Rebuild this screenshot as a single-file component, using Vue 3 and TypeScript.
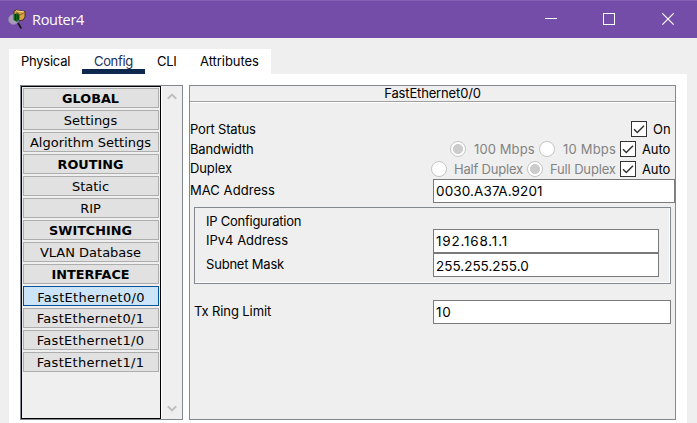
<script setup lang="ts">
import { ref } from 'vue'

interface NavItem { text: string; heading?: boolean }

const tabs = ['Physical', 'Config', 'CLI', 'Attributes']
const activeTab = ref('Config')
const nav: NavItem[] = [
  { text: 'GLOBAL', heading: true },
  { text: 'Settings' },
  { text: 'Algorithm Settings' },
  { text: 'ROUTING', heading: true },
  { text: 'Static' },
  { text: 'RIP' },
  { text: 'SWITCHING', heading: true },
  { text: 'VLAN Database' },
  { text: 'INTERFACE', heading: true },
  { text: 'FastEthernet0/0' },
  { text: 'FastEthernet0/1' },
  { text: 'FastEthernet1/0' },
  { text: 'FastEthernet1/1' },
]
const selected = ref('FastEthernet0/0')
</script>

<template>
  <div class="window">
    <header class="titlebar">
      <svg class="logo" width="19" height="20" viewBox="0 0 19 20">
        <path d="M6 2 8 1 17 2.500 17 8 15 11 10 12 6 6Z" fill="#d9a348" stroke="#3c2a18" stroke-width=".9" />
        <path d="M8 2.500 12 6 16.500 3.500" fill="none" stroke="#8a5d22" />
        <path d="M8 1.800 16 2.800" stroke="#ffe08a" />
        <circle cx="5.500" cy="10.500" r="5" fill="#a99bbb" stroke="#8d78ad" />
        <path d="M5.500 5.500 9 4 11.500 6 11.500 10.500 9 13 5.500 11Z" fill="#12651c" />
        <path d="M7.500 5v6M10 5.500v5" stroke="#0a2d10" />
        <path d="M10 14 13.300 19.500" stroke="#171717" stroke-width="1.800" />
      </svg>
      <h1 class="title">Router4</h1>
      <svg class="controls" width="131" height="12" viewBox="0 0 131 12" fill="none" stroke="#fff">
        <path d="M0 5.500h12" />
        <rect x="58.500" y=".5" width="11" height="11" />
        <path d="M117.300.3l11.400 11.400M128.700.3l-11.400 11.400" stroke-width="1.100" />
      </svg>
    </header>

    <nav class="tabs">
      <button v-for="t in tabs" :key="t" class="tab" :class="[t.toLowerCase(), { active: t === activeTab }]" @click="activeTab = t">
        <span>{{ t }}</span>
      </button>
    </nav>

    <main class="page">
      <aside class="sidebar">
        <div class="list">
          <button v-for="n in nav" :key="n.text" class="item" :class="{ heading: n.heading, port: n.text.startsWith('Fast'), selected: n.text === selected }">{{ n.text }}</button>
        </div>
        <div class="scroll">
          <svg width="10" height="7" viewBox="0 0 10 7"><path d="M.8 5.800 5 1.600l4.200 4.200" /></svg>
          <svg width="10" height="7" viewBox="0 0 10 7"><path d="M.8 1.200 5 5.400l4.200-4.200" /></svg>
        </div>
      </aside>

      <section class="panel">
        <h2 class="panel-title">FastEthernet0/0</h2>
        <div class="row status">
          <span class="label">Port Status</span>
          <span class="check"><svg width="16" height="16"><path d="M3 8.200 6.300 11.500 13 4.800" /></svg></span><span class="on">On</span>
        </div>
        <div class="row bandwidth">
          <span class="label">Bandwidth</span>
          <i class="radio filled"></i><span class="dim w100">100 Mbps</span>
          <i class="radio"></i><span class="dim w10">10 Mbps</span>
          <span class="check"><svg width="16" height="16"><path d="M3 8.200 6.300 11.500 13 4.800" /></svg></span><span class="auto">Auto</span>
        </div>
        <div class="row duplex">
          <span class="label">Duplex</span>
          <i class="radio"></i><span class="dim half">Half Duplex</span>
          <i class="radio filled"></i><span class="dim full">Full Duplex</span>
          <span class="check"><svg width="16" height="16"><path d="M3 8.200 6.300 11.500 13 4.800" /></svg></span><span class="auto">Auto</span>
        </div>
        <div class="row mac">
          <span class="label">MAC Address</span>
          <input class="field" value="0030.A37A.9201" />
        </div>
        <div class="group">
          <div class="legend">IP Configuration</div>
          <div class="row ip"><span class="label">IPv4 Address</span><input class="field" value="192.168.1.1" /></div>
          <div class="row mask"><span class="label">Subnet Mask</span><input class="field" value="255.255.255.0" /></div>
        </div>
        <div class="row tx"><span class="label">Tx Ring Limit</span><input class="field" value="10" /></div>
      </section>
    </main>
  </div>
</template>

<style>
body { margin: 0; overflow: hidden; }
</style>

<style scoped>
* { box-sizing: border-box; }
button, input { font: inherit; color: inherit; margin: 0; border-radius: 0; outline: 0; }
.window { display: flex; flex-direction: column; width: 697px; height: 423px; background: #efefef; color: #000; font: 13px/16px Inter, "Liberation Sans", sans-serif; overflow: hidden; white-space: nowrap; }
.titlebar { display: flex; height: 38px; flex: none; padding: 0 21px 0 8px; background: #744da9; border-top: 1px solid #825fb2; color: #fff; align-items: flex-start; }
.logo { margin-top: 8px; }
.title { margin: 8px 0 0 5px; font: 400 14.500px/22px "Open Sans", "Noto Sans", sans-serif; letter-spacing: -.3px; }
.controls { margin: 12px 0 0 auto; }
.tabs { display: flex; align-self: flex-start; margin: 11px 0 0 9px; height: 25px; background: #fff; width: 262px; padding-left: 12px; }
.tab { background: none; border: 0; padding: 4px 0 0; display: flex; align-items: flex-start; }
.tab.physical { width: 61px; letter-spacing: -.25px; }
.tab.config { width: 63px; padding-left: 12px; color: #1c2f55; border-bottom: 5px solid #0d274d; height: 25px; letter-spacing: -.35px; }
.tab.cli { width: 43px; padding-left: 12px; letter-spacing: -.3px; }
.tab.attributes { padding-left: 12px; letter-spacing: -.05px; }
.page { display: flex; flex: 1; width: 678px; margin-left: 9px; padding: 11px 11px 3px; background: #fff; gap: 6px; }
.sidebar { display: flex; width: 163px; height: 335px; border: 1px solid #828790; background: #efefef; }
.list { display: flex; flex-direction: column; gap: 2px; width: 140px; padding: 1px; border: 1px solid #000; }
.item { height: 20px; flex: none; padding: 0 1px 0 0; border: 1px solid #adadad; background: #e1e1e1; font: 13px/19px "DejaVu Sans", sans-serif; text-align: center; }
.item.port { letter-spacing: .3px; }
.item.heading { font-weight: 700; font-size: 12.800px; line-height: 18px; padding-top: 1px; }
.item.selected { border-color: #005499; background: #cce4f7; padding: 1px 0 0; }
.scroll { display: flex; flex: 1; flex-direction: column; justify-content: space-between; align-items: center; padding: 7px 0; border-left: 1px solid #fff; }
.scroll path { fill: none; stroke: #bfbfbf; stroke-width: 2; }
.panel { width: 487px; height: 335px; border: 1px solid #828790; background: #efefef; }
.panel-title { margin: 0; height: 16px; border-bottom: 1px solid #a0a0a0; box-shadow: 0 1px #fff; text-align: center; font: inherit; line-height: 15px; letter-spacing: -.15px; }
.row { display: flex; }
.label { margin-right: auto; }
.status { height: 20px; margin-top: 19px; padding: 0 4px 0 0; line-height: 17px; }
.status .label { letter-spacing: -.2px; }
.bandwidth { height: 20px; padding-right: 4px; line-height: 17px; }
.bandwidth .label { letter-spacing: -.2px; }
.duplex { height: 18px; padding-right: 4px; line-height: 17px; }
.duplex .label { line-height: 15px; letter-spacing: -.1px; }
.check { width: 16px; height: 16px; background: #fff; box-shadow: inset 0 0 0 1px #333; }
.check svg { display: block; }
.check path { fill: none; stroke: #333; stroke-width: 1.500; }
.on { width: 24px; padding-left: 6px; }
.auto { width: 35px; padding-left: 6px; letter-spacing: -.1px; }
.radio { width: 16px; height: 16px; border: 1px solid #c5c5c5; border-radius: 50%; background: #fff; }
.radio.filled { background: radial-gradient(circle, #ccc 4.700px, #fff 5.300px); }
.dim { color: #838383; padding-left: 8px; }
.w100 { width: 73px; letter-spacing: .1px; }
.w10 { width: 65px; letter-spacing: .2px; }
.half { width: 80px; padding-left: 7px; letter-spacing: -.2px; }
.full { width: 77px; padding-left: 7px; letter-spacing: -.15px; }
.mac { height: 24px; line-height: 23px; }
.mac .label { letter-spacing: .05px; }
.field { width: 242px; height: 24px; padding: 0 2px 1px; border: 1px solid #7a7a7a; background: #fff; font-size: 13.500px; }
.mac .field { letter-spacing: .12px; }
.group { width: 477px; height: 77px; margin: 4px 0 0 4px; border: 1px solid #828790; box-shadow: inset -1px -1px #fff; padding: 6px 11px 0; }
.legend { height: 15px; line-height: 14px; letter-spacing: -.25px; }
.ip, .mask { height: 24px; line-height: 23px; }
.mask .label { letter-spacing: -.2px; }
.ip .field, .mask .field { width: 226px; }
.ip .field { letter-spacing: .8px; }
.mask .field { padding: 1px 2px 0; }
.tx { width: 481px; margin-top: 16px; padding-left: 4px; line-height: 22px; }
.tx .label { letter-spacing: -.1px; }
.tx .field { width: 238px; letter-spacing: .8px; }
</style>
